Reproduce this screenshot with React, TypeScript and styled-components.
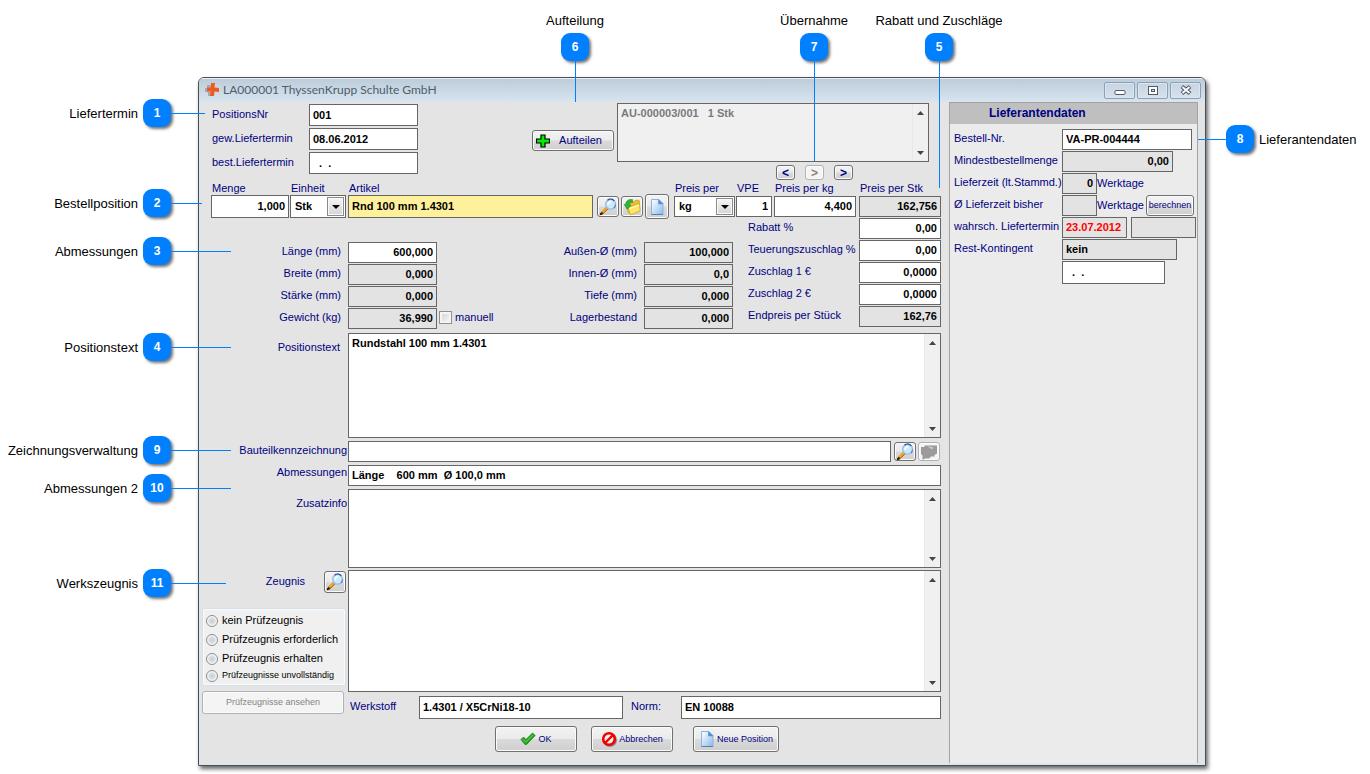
import React from 'react';
import styled, { createGlobalStyle, css } from 'styled-components';

const NAVY = '#000080';
const LINE = '#666666';
const BLUE = '#0080ff';
const PANEL = '#e4e4e4';

const GlobalStyle = createGlobalStyle`
  *, *::before, *::after { box-sizing: border-box; }
  body {
    margin: 0;
    background: #ffffff;
    font-family: 'Liberation Sans', Arial, sans-serif;
    font-size: 11px;
    line-height: 13px;
    color: ${NAVY};
  }
  input, textarea, select, button { font-family: inherit; margin: 0; }
`;

/* ---------- page and callouts ---------- */

const Page = styled.main`
  position: relative;
  min-width: 1180px;
  padding: 77px 164px 8px 198px;
`;

type Side = 'left' | 'right' | 'top';

const CalloutRoot = styled.div<{ $side: Side; $at: number }>`
  position: absolute;
  display: flex;
  align-items: center;
  color: #000000;
  font-size: 13px;
  line-height: 16px;
  white-space: nowrap;
  pointer-events: none;
  ${({ $side, $at }) =>
    $side === 'left' &&
    css`
      left: 0;
      top: ${$at - 14}px;
    `}
  ${({ $side, $at }) =>
    $side === 'right' &&
    css`
      right: 0;
      top: ${$at - 14}px;
      flex-direction: row-reverse;
    `}
  ${({ $side, $at }) =>
    $side === 'top' &&
    css`
      right: ${$at}px;
      top: 12px;
      width: 0;
      flex-direction: column;
    `}
`;

const CalloutText = styled.span<{ $side: Side }>`
  padding-top: 1px;
  ${({ $side }) => $side === 'left' && 'width: 138px; margin-right: 5px; text-align: right;'}
  ${({ $side }) => $side === 'right' && 'width: 111px; margin-left: 5px;'}
  ${({ $side }) => $side === 'top' && 'margin-bottom: 4px;'}
`;

const Badge = styled.span`
  display: flex;
  flex: none;
  align-items: center;
  justify-content: center;
  width: 28px;
  height: 28px;
  border-radius: 9px;
  background: ${BLUE};
  box-shadow: 2px 2px 3px rgba(0, 0, 0, 0.55);
  color: #ffffff;
  font-size: 12px;
  font-weight: bold;
`;

const Leader = styled.span<{ $side: Side; $length: number }>`
  flex: none;
  background: ${BLUE};
  ${({ $side, $length }) =>
    $side === 'top' ? `width: 1px; height: ${$length}px;` : `height: 1px; width: ${$length}px;`}
`;

function Callout(props: { n: number; text: string; side: Side; at: number; length: number }) {
  return (
    <CalloutRoot $side={props.side} $at={props.at}>
      <CalloutText $side={props.side}>{props.text}</CalloutText>
      <Badge>{props.n}</Badge>
      <Leader $side={props.side} $length={props.length} />
    </CalloutRoot>
  );
}

/* ---------- window frame ---------- */

const Window = styled.section`
  border: 1px solid #4c4f52;
  border-radius: 6px 6px 0 0;
  background: ${PANEL};
  box-shadow: 2px 3px 4px rgba(0, 0, 0, 0.6);
  overflow: hidden;
`;

const TitleBar = styled.header`
  display: flex;
  align-items: center;
  height: 24px;
  padding: 0 4px 0 6px;
  background: linear-gradient(#bccbd8, #d8e5f1);
  box-shadow: inset 0 1px 0 #e9f0f6;
`;

const Title = styled.h1`
  flex: 1;
  margin: 0 0 0 4px;
  color: #4e5d6b;
  font-family: Lato, 'Open Sans', sans-serif;
  font-size: 12px;
  font-weight: normal;
  line-height: 16px;
`;

const CaptionButtons = styled.div`
  display: flex;
  gap: 2px;
`;

const CaptionButton = styled.button`
  display: flex;
  align-items: center;
  justify-content: center;
  width: 31px;
  height: 17px;
  padding: 0;
  border: 1px solid #8f9fb2;
  border-radius: 2px;
  background: linear-gradient(#c6d3e1, #d6e2ee);
  box-shadow: inset 0 0 0 1px #dbe6f0;
`;

const WindowBody = styled.div`
  display: flex;
  padding: 0 6px 1px 2px;
  border: solid #d6e6f4;
  border-width: 0 1px 1px;
`;

/* ---------- shared controls ---------- */

const Label = styled.label`
  padding-bottom: 2px;
  color: ${NAVY};
  white-space: nowrap;
`;

const Input = styled.input<{ $w?: number; $h?: number; $num?: boolean; $fill?: string; $ink?: string }>`
  ${({ $w }) => ($w ? `flex: none; width: ${$w}px;` : 'flex: 1; width: 100%; min-width: 0;')}
  height: ${({ $h }) => $h ?? 21}px;
  padding: 0 3px 1px;
  border: 1px solid ${LINE};
  border-radius: 0;
  outline: none;
  background: ${({ $fill }) => $fill ?? '#ffffff'};
  color: ${({ $ink }) => $ink ?? '#000000'};
  font-size: 11px;
  font-weight: bold;
  text-align: ${({ $num }) => ($num ? 'right' : 'left')};

  &:read-only { background: ${({ $fill }) => $fill ?? '#e3e3e3'}; }
`;

const Button = styled.button<{ $w: number; $h: number; $small?: boolean }>`
  display: flex;
  flex: none;
  align-items: center;
  justify-content: center;
  gap: 2px;
  width: ${({ $w }) => $w}px;
  height: ${({ $h }) => $h}px;
  padding: 0;
  border: 1px solid #707070;
  border-radius: 3px;
  background: linear-gradient(#f3f3f3 0%, #ebebeb 48%, #dadada 52%, #cfcfcf 100%);
  box-shadow: inset 0 0 0 1px #fbfbfb;
  color: ${NAVY};
  font-size: ${({ $small }) => ($small ? 9 : 11)}px;
  line-height: 13px;
  white-space: nowrap;

  &:disabled {
    border-color: #adb2b5;
    background: #f4f4f4;
    color: #838383;
  }
`;

const ScrollFrame = styled.div<{ $h: number; $fill: string }>`
  display: flex;
  flex: 1;
  min-width: 0;
  height: ${({ $h }) => $h}px;
  border: 1px solid ${LINE};
  background: ${({ $fill }) => $fill};
`;

const TextBox = styled.textarea<{ $ink?: string }>`
  flex: 1;
  min-width: 0;
  padding: 3px;
  border: 0;
  outline: none;
  resize: none;
  overflow: hidden;
  background: transparent;
  color: ${({ $ink }) => $ink ?? '#000000'};
  font-size: 11px;
  font-weight: bold;
  line-height: 13px;
`;

const ScrollTrack = styled.div`
  display: flex;
  flex-direction: column;
  align-items: center;
  justify-content: space-between;
  width: 16px;
  padding: 7px 0 6px;
  background: #f0f0f0;
  border-left: 1px solid #e8e8e8;
`;

function ScrollText(props: { id?: string; h: number; fill?: string; ink?: string; text?: string; label?: string }) {
  return (
    <ScrollFrame $h={props.h} $fill={props.fill ?? '#ffffff'}>
      <TextBox
        id={props.id}
        aria-label={props.label}
        $ink={props.ink}
        defaultValue={props.text ?? ''}
        spellCheck={false}
      />
      <ScrollTrack aria-hidden="true">
        <svg width="7" height="4" viewBox="0 0 7 4"><path d="M3.5 0 7 4H0z" fill="#444" /></svg>
        <svg width="7" height="4" viewBox="0 0 7 4"><path d="M0 0h7L3.5 4z" fill="#444" /></svg>
      </ScrollTrack>
    </ScrollFrame>
  );
}

const SelectFrame = styled.div<{ $w: number; $h: number }>`
  position: relative;
  flex: none;
  width: ${({ $w }) => $w}px;
  height: ${({ $h }) => $h}px;
`;

const Select = styled.select`
  appearance: none;
  width: 100%;
  height: 100%;
  padding: 0 20px 1px 4px;
  border: 1px solid ${LINE};
  border-radius: 0;
  outline: none;
  background: #ffffff;
  color: #000000;
  font-size: 11px;
  font-weight: bold;
`;

const SelectArrow = styled.span`
  position: absolute;
  top: 2px;
  right: 2px;
  bottom: 2px;
  display: flex;
  align-items: center;
  justify-content: center;
  width: 17px;
  border: 1px solid #8a8a8a;
  background: linear-gradient(#f6f6f6, #d4d4d4);
  box-shadow: inset 0 0 0 1px #fafafa;
  pointer-events: none;
`;

function DropDown(props: { id: string; w: number; h: number; value: string }) {
  return (
    <SelectFrame $w={props.w} $h={props.h}>
      <Select id={props.id} defaultValue={props.value}>
        <option>{props.value}</option>
      </Select>
      <SelectArrow>
        <svg width="8" height="4" viewBox="0 0 8 4"><path d="M0 0h8L4 4z" fill="#000" /></svg>
      </SelectArrow>
    </SelectFrame>
  );
}

/* ---------- icons ---------- */

const LogoIcon = () => (
  <svg width="14" height="14" viewBox="0 0 14 14" aria-hidden="true">
    <path d="M2 2h4v3H4v4h2v4H3V9H0V5h2z" fill="#a3abb3" />
    <path d="M6 0h4l-.5 4.500L14 5v4l-4.500-.5L9 13H5l.5-4.500L2 8.500v-4h4z" fill="#ee5a22" />
  </svg>
);

const MinimizeIcon = () => (
  <svg width="12" height="12" viewBox="0 0 12 12" aria-hidden="true">
    <rect x="1" y="6.500" width="10" height="4" rx="1" fill="#fff" stroke="#515a66" />
  </svg>
);

const MaximizeIcon = () => (
  <svg width="12" height="12" viewBox="0 0 12 12" aria-hidden="true">
    <rect x="1.500" y="2.500" width="9" height="8" fill="#fff" stroke="#515a66" />
    <rect x="4.500" y="5.500" width="3" height="2" fill="#d3deea" stroke="#515a66" />
  </svg>
);

const CloseIcon = () => (
  <svg width="12" height="12" viewBox="0 0 12 12" aria-hidden="true">
    <path d="M2 2.500 10 9.500M10 2.500 2 9.500" stroke="#515a66" strokeWidth="4" />
    <path d="M2.500 3 9.500 9M9.500 3 2.500 9" stroke="#fff" strokeWidth="1.800" />
  </svg>
);

const SearchIcon = () => (
  <svg width="18" height="18" viewBox="0 0 18 18" aria-hidden="true">
    <path d="M3 15.300 8 10.300" stroke="#9a5a10" strokeWidth="3" strokeLinecap="round" />
    <path d="M3 14.800 7.800 10" stroke="#ffa21f" strokeWidth="2.200" strokeLinecap="round" />
    <path d="M1.600 16.200 3 15" stroke="#2b1c0a" strokeWidth="1.800" strokeLinecap="round" />
    <circle cx="11.600" cy="6.200" r="4.900" fill="#c6ecfd" stroke="#9dbbe4" strokeWidth="1.400" />
    <path d="M8.500 2.300a5 5 0 0 1 6.800.5" fill="none" stroke="#2a4c9a" strokeWidth="1.200" />
    <path d="M16.500 6.500a5 5 0 0 1-1.500 3.500" fill="none" stroke="#5f7fc4" strokeWidth="1.200" />
    <path d="M9 6.800a3 3 0 0 1 3.200-3" fill="none" stroke="#fff" strokeWidth="1.600" />
  </svg>
);

const FolderIcon = () => (
  <svg width="18" height="18" viewBox="0 0 18 18" aria-hidden="true">
    <path d="M8 4.500 11 4l1-1.500 3.500-.5 1 1v10l-9 3.500-3-3z" fill="#e8c02c" stroke="#c29a1c" strokeWidth="0.600" />
    <path d="M5 9.500 16.500 5.500l.5 7.500-9.500 3.800z" fill="#ffe66a" stroke="#c99f1e" strokeWidth="0.600" />
    <path d="M6.500 10.500 15.500 7.300" stroke="#fffbd0" strokeWidth="1.200" />
    <path d="M9.500 1.500C5.500 1 2.800 3 2.600 6.500L1 6.300l3.300 5.200L8 7l-1.800-.2C6.300 5 7.500 4 9.800 4.200z" fill="#2fb52f" stroke="#1c7f22" strokeWidth="0.500" />
  </svg>
);

const PageIcon = () => (
  <svg width="16" height="18" viewBox="0 0 16 18" aria-hidden="true">
    <defs>
      <linearGradient id="sheet" x1="0" y1="0" x2="1" y2="1">
        <stop offset="0.100" stopColor="#f6fbff" />
        <stop offset="1" stopColor="#86b8ec" />
      </linearGradient>
    </defs>
    <path d="M2.500 1.500h7.500l4 4v11H2.500z" fill="url(#sheet)" stroke="#8fb2df" />
    <path d="M9.500 1.500 14 6H9.500z" fill="#4f8fe0" stroke="#5d8fd0" strokeWidth="0.600" />
    <path d="M2.500 16.500H14" stroke="#5a7fae" />
  </svg>
);

const PlusIcon = () => (
  <svg width="14" height="14" viewBox="0 0 14 14" aria-hidden="true">
    <path d="M5 1h4v4h4.500v4H9v4H5V9H.5V5H5z" fill="#00f000" stroke="#000" strokeWidth="1.200" />
  </svg>
);

const CheckIcon = () => (
  <svg width="16" height="14" viewBox="0 0 16 14" aria-hidden="true">
    <path d="M1 7.500 3.500 5 6 7.500 12.500 1 15.200 3.500 6.500 12.500H5z" fill="#23a81f" stroke="#127312" strokeWidth="0.700" />
    <path d="M2.500 7.200 5.800 10 13 2.800" fill="none" stroke="#6bd85c" />
  </svg>
);

const ForbiddenIcon = () => (
  <svg width="16" height="16" viewBox="0 0 16 16" aria-hidden="true">
    <circle cx="9" cy="9" r="5.800" fill="none" stroke="#8d8d8d" strokeWidth="2.400" />
    <circle cx="8" cy="8" r="5.800" fill="#eee" stroke="#f00000" strokeWidth="2.600" />
    <path d="M4 12 12 4" stroke="#f00000" strokeWidth="2.400" />
  </svg>
);

const DrawingIcon = () => (
  <svg width="18" height="16" viewBox="0 0 18 16" aria-hidden="true">
    <path d="M1 3h3l1-1.500h12v8L14.500 11v1.500H11l-2 2H5L2.500 16v-4.500L1 10z" fill="#9b9b9b" />
    <path d="M9 2.500 10.500 4H13" fill="none" stroke="#f4f4f4" />
  </svg>
);

/* ---------- main form ---------- */

const MainPane = styled.div`
  display: flex;
  flex: 1;
  flex-direction: column;
  min-width: 0;
  padding: 1px 8px 11px 0;
`;

const HeadSection = styled.div`
  display: flex;
  align-items: flex-start;
  padding: 0 12px 0 10px;
`;

const HeadFields = styled.div`
  display: grid;
  grid-template-columns: 97px 109px;
  align-items: center;
  row-gap: 2px;
  margin: 1px auto 0 0;
`;

const SplitAction = styled.div`
  padding: 27px 3px 0 0;
`;

const SplitLabel = styled.span`
  flex: 1;
  text-align: center;
`;

const SplitButton = styled(Button)`
  padding: 0 4px 0 3px;
`;

const SplitColumn = styled.div`
  display: flex;
  flex-direction: column;
  gap: 3px;
  width: 312px;
`;

const StepButtons = styled.div`
  display: flex;
  justify-content: flex-end;
  gap: 10px;
  padding-right: 76px;
`;

const StepButton = styled(Button)`
  font-weight: bold;
  font-size: 12px;
  line-height: 12px;
`;

const OrderSection = styled.div`
  display: flex;
  gap: 1px;
  padding: 1px 0 0 9px;
`;

const OrderColumn = styled.div<{ $fixed?: boolean }>`
  ${({ $fixed }) => ($fixed ? 'flex: none; width: 205px;' : 'flex: 1; min-width: 0;')}
`;

const FieldRow = styled.div`
  display: flex;
  align-items: flex-end;
`;

const Field = styled.div<{ $grow?: boolean; $gap?: number }>`
  flex: ${({ $grow }) => ($grow ? '1' : 'none')};
  min-width: 0;
  margin-right: ${({ $gap }) => $gap ?? 0}px;
`;

const FieldLabel = styled(Label)`
  display: block;
  height: 14px;
  padding-left: 1px;
  line-height: 15px;
`;

const FieldControl = styled.div`
  display: flex;
  align-items: center;
  height: 23px;
`;

function Captioned(props: { id: string; label: string; gap?: number; grow?: boolean; children: React.ReactNode }) {
  return (
    <Field $gap={props.gap} $grow={props.grow}>
      <FieldLabel htmlFor={props.id}>{props.label}</FieldLabel>
      <FieldControl>{props.children}</FieldControl>
    </Field>
  );
}

const IconGroup = styled.div`
  display: flex;
  align-items: center;
  gap: 2px;
  height: 23px;
  margin: 0 5px 0 4px;
`;

const Dimensions = styled.div`
  display: flex;
  justify-content: space-between;
  margin-top: 24px;
  padding-right: 2px;
`;

const DimensionGroup = styled.div<{ $labelWidth: number }>`
  display: grid;
  grid-template-columns: ${({ $labelWidth }) => $labelWidth}px auto;
  grid-auto-rows: 21px;
  align-items: center;
  gap: 1px 7px;
  text-align: right;
`;

const WeightCell = styled.div`
  display: flex;
  align-items: center;
  gap: 2px;
`;

const CheckLabel = styled(Label)`
  display: flex;
  align-items: center;
  gap: 3px;
`;

const CheckBox = styled.input`
  appearance: none;
  width: 13px;
  height: 13px;
  border: 1px solid #8e8f8f;
  background: linear-gradient(135deg, #cfd3d8, #f8f8f8);
  box-shadow: inset 0 0 0 2px #f4f4f4;
  &:checked { background: ${NAVY}; }
`;

const PriceRow = styled.div`
  display: flex;
  align-items: center;
  justify-content: space-between;
  height: 22px;
  padding: 0 0 1px 12px;
`;

const TextRows = styled.div`
  display: flex;
  flex-direction: column;
  gap: 3px;
  margin: 4px 0 2px;
`;

const TextRow = styled.div`
  display: flex;
`;

const SideLabel = styled(Label)<{ $top: number; $right?: number }>`
  flex: none;
  width: 146px;
  padding: ${({ $top }) => $top}px ${({ $right }) => $right ?? 1}px 0 0;
  text-align: right;
`;

const RowButtons = styled.div`
  display: flex;
  align-items: center;
  gap: 2px;
  padding: 0 1px 0 3px;
`;

const Certificates = styled.div`
  display: flex;
  gap: 2px;
`;

const CertificateSide = styled.div`
  flex: none;
  width: 144px;
  padding-top: 1px;
`;

const CertificateHead = styled.div`
  display: flex;
  align-items: center;
  justify-content: flex-end;
  gap: 19px;
`;

const RadioGroup = styled.fieldset`
  min-width: 0;
  margin: 15px 0 5px;
  padding: 2px 3px;
  border: 1px solid #d3dfea;
  border-radius: 2px;
  background: #f0f0f0;
  box-shadow: inset 0 0 0 1px #fafafa;
`;

const RadioLabel = styled.label<{ $small?: boolean }>`
  display: flex;
  align-items: center;
  gap: 4px;
  height: ${({ $small }) => ($small ? 15 : 19)}px;
  color: #000000;
  font-size: ${({ $small }) => ($small ? 9 : 11)}px;
  white-space: nowrap;
`;

const Radio = styled.input`
  appearance: none;
  flex: none;
  width: 12px;
  height: 12px;
  border: 1px solid #8b8d8f;
  border-radius: 50%;
  background: radial-gradient(circle, #c8ccd0 0%, #dfe2e4 45%, #fbfbfb 70%);
  &:checked { background: radial-gradient(circle, #1c3a6e 40%, #fbfbfb 50%); }
`;

const CertificateMain = styled.div`
  display: flex;
  flex: 1;
  flex-direction: column;
  gap: 4px;
  min-width: 0;
`;

const CertificateText = styled.div`
  display: flex;
`;

const MaterialRow = styled.div`
  display: grid;
  grid-template-columns: 71px 204px 58px 1fr;
  align-items: center;
`;

const MaterialLabel = styled(Label)<{ $indent: number }>`
  padding-left: ${({ $indent }) => $indent}px;
`;

const Footer = styled.div`
  display: flex;
  gap: 14px;
  padding: 7px 0 0 293px;
`;

const FooterEnd = styled.div`
  padding-left: 6px;
`;

/* ---------- supplier pane ---------- */

const SupplierPane = styled.aside`
  flex: none;
  width: 249px;
  border: solid #a3a3a3;
  border-width: 1px 1px 0;
  background: #ebebeb;
`;

const SupplierTitle = styled.h2`
  margin: 0 0 5px;
  padding-left: 39px;
  background: #bfbfbf;
  color: ${NAVY};
  font-size: 12px;
  line-height: 21px;
`;

const SupplierGrid = styled.div`
  display: grid;
  grid-template-columns: 108px 1fr;
  align-items: center;
  row-gap: 1px;
  padding-left: 4px;
`;

const SupplierCell = styled.div<{ $gap?: number }>`
  display: flex;
  align-items: center;
  gap: ${({ $gap }) => $gap ?? 0}px;
`;

const Unit = styled.span`
  width: 49px;
`;

const priceRows: Array<[string, string, string, boolean]> = [
  ['rabatt', 'Rabatt %', '0,00', false],
  ['teuerung', 'Teuerungszuschlag %', '0,00', false],
  ['zuschlag1', 'Zuschlag 1 €', '0,0000', false],
  ['zuschlag2', 'Zuschlag 2 €', '0,0000', false],
  ['endpreis', 'Endpreis per Stück', '162,76', true],
];

const stockRows: Array<[string, string, string]> = [
  ['aussen', 'Außen-Ø (mm)', '100,000'],
  ['innen', 'Innen-Ø (mm)', '0,0'],
  ['tiefe', 'Tiefe (mm)', '0,000'],
  ['lager', 'Lagerbestand', '0,000'],
];

const certificateStates = [
  'kein Prüfzeugnis',
  'Prüfzeugnis erforderlich',
  'Prüfzeugnis erhalten',
  'Prüfzeugnisse unvollständig',
];

const leftCallouts: Array<[number, string, number, number]> = [
  [1, 'Liefertermin', 113, 34],
  [2, 'Bestellposition', 203, 31],
  [3, 'Abmessungen', 251, 60],
  [4, 'Positionstext', 347, 60],
  [9, 'Zeichnungsverwaltung', 450, 60],
  [10, 'Abmessungen 2', 488, 60],
  [11, 'Werkszeugnis', 583, 55],
];

function MainForm() {
  return (
    <MainPane>
      <HeadSection>
        <HeadFields>
          <Label htmlFor="posnr">PositionsNr</Label>
          <Input id="posnr" $w={109} $h={22} defaultValue="001" />
          <Label htmlFor="gew">gew.Liefertermin</Label>
          <Input id="gew" $w={109} $h={22} defaultValue="08.06.2012" />
          <Label htmlFor="best">best.Liefertermin</Label>
          <Input id="best" $w={109} $h={22} defaultValue="  .  ." />
        </HeadFields>
        <SplitAction>
          <SplitButton $w={82} $h={21}>
            <PlusIcon />
            <SplitLabel>Aufteilen</SplitLabel>
          </SplitButton>
        </SplitAction>
        <SplitColumn>
          <CertificateText>
            <ScrollText h={59} fill="#f0f0f0" ink="#7a7a7a" text="AU-000003/001   1 Stk" label="Aufteilung" />
          </CertificateText>
          <StepButtons>
            <StepButton $w={19} $h={15}>&lt;</StepButton>
            <StepButton $w={19} $h={15} disabled>&gt;</StepButton>
            <StepButton $w={19} $h={15}>&gt;</StepButton>
          </StepButtons>
        </SplitColumn>
      </HeadSection>

      <OrderSection>
        <OrderColumn>
          <FieldRow>
            <Captioned id="menge" label="Menge" gap={1}>
              <Input id="menge" $w={78} $h={23} $num defaultValue="1,000" />
            </Captioned>
            <Captioned id="einheit" label="Einheit" gap={2}>
              <DropDown id="einheit" w={56} h={23} value="Stk" />
            </Captioned>
            <Captioned id="artikel" label="Artikel" grow>
              <Input id="artikel" $h={23} $fill="#fff09b" defaultValue="Rnd 100 mm 1.4301" />
            </Captioned>
            <IconGroup>
              <Button $w={22} $h={21} aria-label="Artikel suchen"><SearchIcon /></Button>
              <Button $w={22} $h={21} aria-label="Artikel öffnen"><FolderIcon /></Button>
              <Button $w={24} $h={25} aria-label="Neuer Artikel"><PageIcon /></Button>
            </IconGroup>
            <Captioned id="preisper" label="Preis per">
              <DropDown id="preisper" w={61} h={21} value="kg" />
            </Captioned>
          </FieldRow>

          <Dimensions>
            <DimensionGroup $labelWidth={130}>
              <Label htmlFor="laenge">Länge (mm)</Label>
              <Input id="laenge" $w={89} $num defaultValue="600,000" />
              <Label htmlFor="breite">Breite (mm)</Label>
              <Input id="breite" $w={89} $num readOnly value="0,000" />
              <Label htmlFor="staerke">Stärke (mm)</Label>
              <Input id="staerke" $w={89} $num readOnly value="0,000" />
              <Label htmlFor="gewicht">Gewicht (kg)</Label>
              <WeightCell>
                <Input id="gewicht" $w={89} $num readOnly value="36,990" />
                <CheckLabel>
                  <CheckBox type="checkbox" />
                  manuell
                </CheckLabel>
              </WeightCell>
            </DimensionGroup>
            <DimensionGroup $labelWidth={80}>
              {stockRows.map(([id, label, value]) => (
                <React.Fragment key={id}>
                  <Label htmlFor={id}>{label}</Label>
                  <Input id={id} $w={89} $num readOnly value={value} />
                </React.Fragment>
              ))}
            </DimensionGroup>
          </Dimensions>
        </OrderColumn>

        <OrderColumn $fixed>
          <FieldRow>
            <Captioned id="vpe" label="VPE" gap={2}>
              <Input id="vpe" $w={36} $num defaultValue="1" />
            </Captioned>
            <Captioned id="preiskg" label="Preis per kg" gap={3}>
              <Input id="preiskg" $w={82} $num defaultValue="4,400" />
            </Captioned>
            <Captioned id="preisstk" label="Preis per Stk">
              <Input id="preisstk" $w={82} $num readOnly value="162,756" />
            </Captioned>
          </FieldRow>
          {priceRows.map(([id, label, value, locked]) => (
            <PriceRow key={id}>
              <Label htmlFor={id}>{label}</Label>
              <Input id={id} $w={82} $num readOnly={locked} defaultValue={value} />
            </PriceRow>
          ))}
        </OrderColumn>
      </OrderSection>

      <TextRows>
        <TextRow>
          <SideLabel htmlFor="postext" $top={8} $right={8}>Positionstext</SideLabel>
          <ScrollText id="postext" h={105} text="Rundstahl 100 mm 1.4301" />
        </TextRow>
        <TextRow>
          <SideLabel htmlFor="bauteil" $top={3}>Bauteilkennzeichnung</SideLabel>
          <Input id="bauteil" defaultValue="" />
          <RowButtons>
            <Button $w={22} $h={19} aria-label="Zeichnung suchen"><SearchIcon /></Button>
            <Button $w={22} $h={19} aria-label="Zeichnung anzeigen" disabled><DrawingIcon /></Button>
          </RowButtons>
        </TextRow>
        <TextRow>
          <SideLabel htmlFor="abmess" $top={1}>Abmessungen</SideLabel>
          <Input id="abmess" defaultValue="Länge    600 mm  Ø 100,0 mm" />
        </TextRow>
        <TextRow>
          <SideLabel htmlFor="zusatz" $top={8}>Zusatzinfo</SideLabel>
          <ScrollText id="zusatz" h={79} />
        </TextRow>
      </TextRows>

      <Certificates>
        <CertificateSide>
          <CertificateHead>
            <Label htmlFor="zeugnis">Zeugnis</Label>
            <Button $w={22} $h={22} aria-label="Zeugnis suchen"><SearchIcon /></Button>
          </CertificateHead>
          <RadioGroup aria-label="Prüfzeugnis">
            {certificateStates.map((text, i) => (
              <RadioLabel key={text} $small={i === 3}>
                <Radio type="radio" name="zeugnisstatus" />
                {text}
              </RadioLabel>
            ))}
          </RadioGroup>
          <Button $w={142} $h={23} $small disabled>Prüfzeugnisse ansehen</Button>
        </CertificateSide>
        <CertificateMain>
          <CertificateText>
            <ScrollText id="zeugnis" h={122} />
          </CertificateText>
          <MaterialRow>
            <MaterialLabel htmlFor="werkstoff" $indent={2}>Werkstoff</MaterialLabel>
            <Input id="werkstoff" $h={23} defaultValue="1.4301 / X5CrNi18-10" />
            <MaterialLabel htmlFor="norm" $indent={8}>Norm:</MaterialLabel>
            <Input id="norm" $h={23} defaultValue="EN 10088" />
          </MaterialRow>
        </CertificateMain>
      </Certificates>

      <Footer>
        <Button $w={82} $h={26} $small><CheckIcon />OK</Button>
        <Button $w={82} $h={26} $small><ForbiddenIcon />Abbrechen</Button>
        <FooterEnd>
          <Button $w={86} $h={26} $small><PageIcon />Neue Position</Button>
        </FooterEnd>
      </Footer>
    </MainPane>
  );
}

function Supplier() {
  return (
    <SupplierPane>
      <SupplierTitle>Lieferantendaten</SupplierTitle>
      <SupplierGrid>
        <Label htmlFor="bestellnr">Bestell-Nr.</Label>
        <Input id="bestellnr" $w={130} defaultValue="VA-PR-004444" />
        <Label htmlFor="mindest">Mindestbestellmenge</Label>
        <Input id="mindest" $w={111} $num readOnly value="0,00" />
        <Label htmlFor="lieferzeit">Lieferzeit (lt.Stammd.)</Label>
        <SupplierCell>
          <Input id="lieferzeit" $w={35} $num readOnly value="0" />
          <Unit>Werktage</Unit>
        </SupplierCell>
        <Label htmlFor="bisher">Ø Lieferzeit bisher</Label>
        <SupplierCell>
          <Input id="bisher" $w={35} $num readOnly value="" />
          <Unit>Werktage</Unit>
          <Button $w={48} $h={21} $small>berechnen</Button>
        </SupplierCell>
        <Label htmlFor="wahrsch">wahrsch. Liefertermin</Label>
        <SupplierCell $gap={4}>
          <Input id="wahrsch" $w={65} $ink="#ff0000" readOnly value="23.07.2012" />
          <Input aria-label="Abweichung" $w={65} readOnly value="" />
        </SupplierCell>
        <Label htmlFor="kontingent">Rest-Kontingent</Label>
        <Input id="kontingent" $w={115} readOnly value="kein" />
        <span />
        <Input aria-label="Kontingent bis" $w={103} $h={23} defaultValue="  .  ." />
      </SupplierGrid>
    </SupplierPane>
  );
}

export default function App() {
  return (
    <Page>
      <GlobalStyle />
      <Window>
        <TitleBar>
          <LogoIcon />
          <Title>LA000001 ThyssenKrupp Schulte GmbH</Title>
          <CaptionButtons>
            <CaptionButton aria-label="Minimieren"><MinimizeIcon /></CaptionButton>
            <CaptionButton aria-label="Maximieren"><MaximizeIcon /></CaptionButton>
            <CaptionButton aria-label="Schließen"><CloseIcon /></CaptionButton>
          </CaptionButtons>
        </TitleBar>
        <WindowBody>
          <MainForm />
          <Supplier />
        </WindowBody>
      </Window>
      {leftCallouts.map(([n, text, at, length]) => (
        <Callout key={n} n={n} text={text} side="left" at={at} length={length} />
      ))}
      <Callout n={6} text="Aufteilung" side="top" at={795} length={41} />
      <Callout n={7} text="Übernahme" side="top" at={556} length={100} />
      <Callout n={5} text="Rabatt und Zuschläge" side="top" at={431} length={127} />
      <Callout n={8} text="Lieferantendaten" side="right" at={139} length={28} />
    </Page>
  );
}
